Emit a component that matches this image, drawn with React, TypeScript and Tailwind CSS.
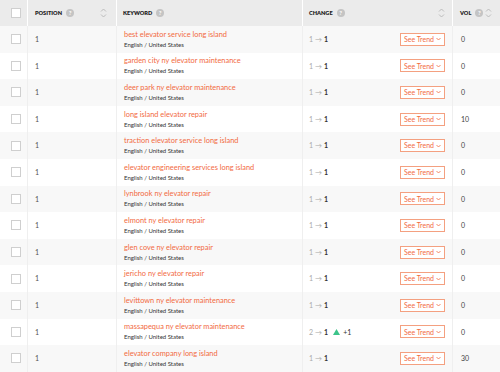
import React from 'react';

type Row = { keyword: string; from: number; to: number; vol: number };

const rows: Row[] = [
  { keyword: 'best elevator service long island', from: 1, to: 1, vol: 0 },
  { keyword: 'garden city ny elevator maintenance', from: 1, to: 1, vol: 0 },
  { keyword: 'deer park ny elevator maintenance', from: 1, to: 1, vol: 0 },
  { keyword: 'long island elevator repair', from: 1, to: 1, vol: 10 },
  { keyword: 'traction elevator service long island', from: 1, to: 1, vol: 0 },
  { keyword: 'elevator engineering services long island', from: 1, to: 1, vol: 0 },
  { keyword: 'lynbrook ny elevator repair', from: 1, to: 1, vol: 0 },
  { keyword: 'elmont ny elevator repair', from: 1, to: 1, vol: 0 },
  { keyword: 'glen cove ny elevator repair', from: 1, to: 1, vol: 0 },
  { keyword: 'jericho ny elevator repair', from: 1, to: 1, vol: 0 },
  { keyword: 'levittown ny elevator maintenance', from: 1, to: 1, vol: 0 },
  { keyword: 'massapequa ny elevator maintenance', from: 2, to: 1, vol: 0 },
  { keyword: 'elevator company long island', from: 1, to: 1, vol: 30 },
];

const cols = 'grid grid-cols-[28px_89px_186px_150px_47px]';

function Help() {
  return (
    <span className="inline-flex h-[8px] w-[8px] items-center justify-center rounded-full bg-[#c4c4c4] text-[6px] font-bold leading-none text-white">?</span>
  );
}

function Sort() {
  return (
    <svg width="7" height="12" viewBox="0 0 7 12" fill="none" stroke="#b5b5b5" strokeWidth="0.9">
      <path d="M1 4.5 L3.5 2 L6 4.5" />
      <path d="M1 7.5 L3.5 10 L6 7.5" />
    </svg>
  );
}

function Box() {
  return <div className="h-[10px] w-[10px] border border-[#cfcfcf] bg-white" />;
}

export default function App() {
  return (
    <div className="h-[372px] w-[500px] overflow-hidden bg-white text-[#333]" style={{ fontFamily: 'Lato, "Noto Sans", sans-serif' }}>
      {/* header */}
      <div className={`${cols} h-[26px] bg-[#ebebeb] text-[5.6px] font-extrabold uppercase text-[#222]`}>
        <div className="flex items-center justify-center border-r border-white pl-[4px]">
          <Box />
        </div>
        <div className="flex items-center justify-between border-r border-white pl-[7px] pr-[9px]">
          <span className="flex items-center gap-[4px]">Position <Help /></span>
          <Sort />
        </div>
        <div className="flex items-center border-r border-white pl-[6px]">
          <span className="flex items-center gap-[4px]">Keyword <Help /></span>
        </div>
        <div className="flex items-center justify-between border-r border-white pl-[6px] pr-[7px]">
          <span className="flex items-center gap-[4px]">Change <Help /></span>
          <Sort />
        </div>
        <div className="flex items-center justify-between pl-[7px] pr-[8px]">
          <span className="flex items-center gap-[4px]">Vol <Help /></span>
          <Sort />
        </div>
      </div>

      {rows.map((r, i) => (
        <div key={r.keyword} className={`${cols} h-[26.6px] ${i % 2 === 0 ? 'bg-[#f8f8f8]' : 'bg-white'}`}>
          <div className="flex items-center justify-center border-r border-[#efefef] pl-[4px]">
            <Box />
          </div>
          <div className="flex items-center border-r border-[#efefef] pl-[7px] text-[7px] text-[#555]">{r.to}</div>
          <div className="flex flex-col justify-center border-r border-[#efefef] pl-[7px] leading-none">
            <span className="text-[7.4px] text-[#f26a3f]">{r.keyword}</span>
            <span className="mt-[3.5px] text-[6px] text-[#333]">English / United States</span>
          </div>
          <div className="flex items-center justify-between border-r border-[#efefef] pl-[6px] pr-[7px]">
            <span className="flex items-center gap-[2px] text-[7px]">
              <span className="text-[#aaa]">{r.from}</span>
              <span className="text-[#aaa]">→</span>
              <span className="font-bold text-[#333]">{r.to}</span>
              {r.from !== r.to && (
                <span className="ml-[3px] flex items-center gap-[3px]">
                  <svg width="7" height="6" viewBox="0 0 7 6"><path d="M3.5 0 L7 6 L0 6 Z" fill="#3cc48a" /></svg>
                  <span className="text-[#333]">+{r.from - r.to}</span>
                </span>
              )}
            </span>
            <button className="flex h-[13px] items-center gap-[2px] border border-[#f4a080] bg-white px-[3px] text-[7px] text-[#f26a3f]">
              See Trend
              <svg width="5" height="4" viewBox="0 0 5 4" fill="none" stroke="#f26a3f" strokeWidth="0.8"><path d="M0.5 1 L2.5 3 L4.5 1" /></svg>
            </button>
          </div>
          <div className="flex items-center pl-[8px] text-[7px] text-[#444]">{r.vol}</div>
        </div>
      ))}
    </div>
  );
}
